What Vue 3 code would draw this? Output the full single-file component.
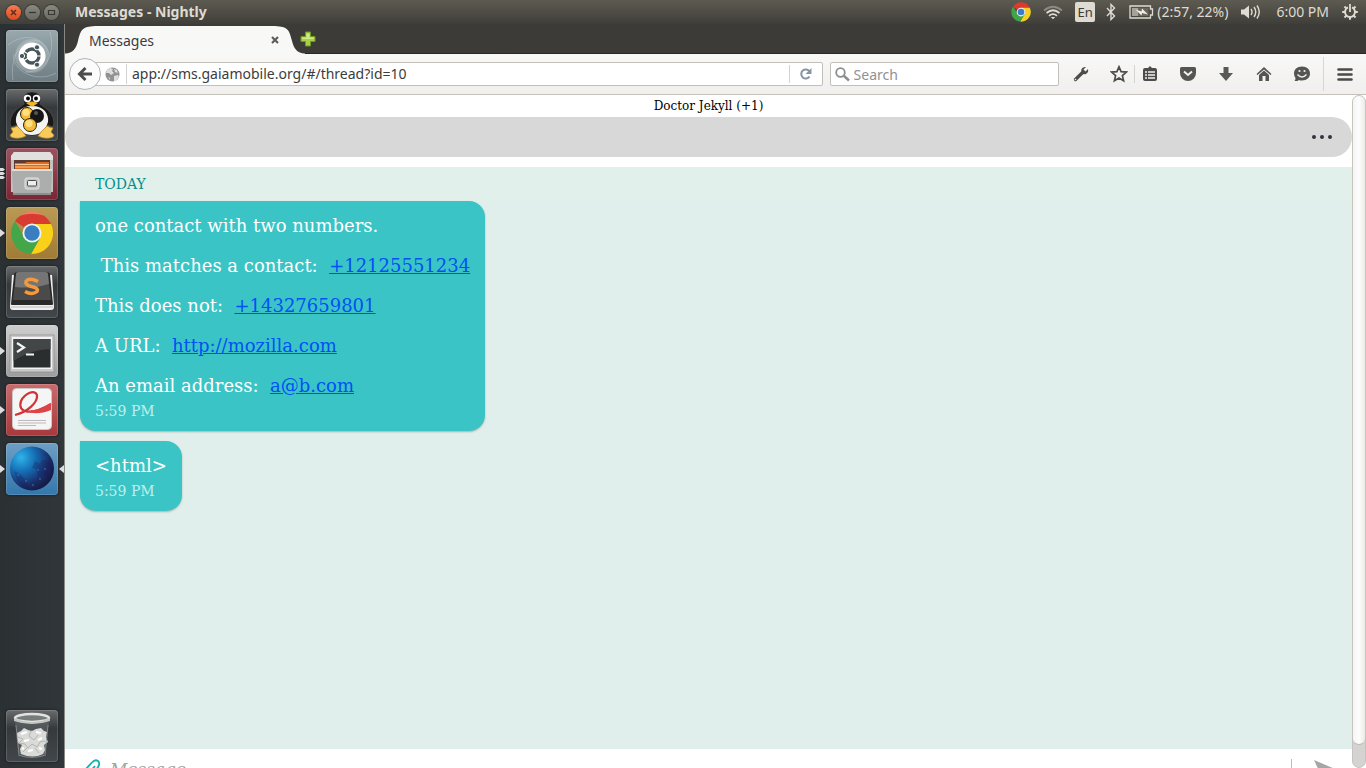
<script setup>
import { ref } from 'vue'

const address = ref('app://sms.gaiamobile.org/#/thread?id=10')
const query = ref('')
const draft = ref('')

const lines = [
  { text: ' This matches a contact:  ', link: '+12125551234', href: 'tel:+12125551234' },
  { text: 'This does not:  ', link: '+14327659801', href: 'tel:+14327659801' },
  { text: 'A URL:  ', link: 'http://mozilla.com', href: 'http://mozilla.com' },
  { text: 'An email address:  ', link: 'a@b.com', href: 'mailto:a@b.com' },
]
const spokes = [45, 90, 135, 180, 225, 270, 315]
</script>

<template>
  <div class="desktop">
    <header class="panel">
      <div class="window-buttons">
        <button class="wb wb-close" aria-label="Close window">
          <svg width="15" height="15" viewBox="0 0 15 15"><path d="M5 5l5 5M10 5l-5 5" stroke="#57301f" stroke-width="1.5" /></svg>
        </button>
        <button class="wb" aria-label="Minimize">
          <svg width="15" height="15" viewBox="0 0 15 15"><path d="M4 7.5h7" stroke="#383732" stroke-width="1.3" /></svg>
        </button>
        <button class="wb" aria-label="Restore">
          <svg width="15" height="15" viewBox="0 0 15 15"><path d="M4.5 5.500h6v4h-6z" fill="none" stroke="#383732" stroke-width="1.2" /></svg>
        </button>
      </div>
      <h1 class="window-title">Messages - Nightly</h1>
      <div class="indicators">
        <svg width="20" height="20" viewBox="0 0 48 48">
          <path d="M24 24L5 11A23 23 0 0 1 45 14H24z" fill="#dd3a2c" />
          <path d="M24 24L24 14H45A23 23 0 0 1 22 47L33 29z" fill="#f8cf22" />
          <path d="M24 24L33 29L22 47A23 23 0 0 1 5 11L16 29z" fill="#41a546" />
          <circle cx="24" cy="24" r="10.5" fill="#eef2f5" /><circle cx="24" cy="24" r="8" fill="#3a7cc5" />
        </svg>
        <svg class="i-wifi" width="20" height="16" viewBox="0 0 20 16" fill="none" stroke="#dfdbd2" stroke-width="1.7">
          <path d="M1 6.500Q10-1 19 6.500" stroke="#8d8a82" /><path d="M3.500 9Q10 3.500 16.500 9" /><path d="M6 11.800Q10 8.500 14 11.800" /><path d="M7.800 13h4.400L10 15.200z" fill="#dfdbd2" stroke="none" />
        </svg>
        <span class="lang">En</span>
        <svg class="i-bt" width="10" height="18" viewBox="0 0 10 18" fill="none" stroke="#dfdbd2" stroke-width="1.4"><path d="M1 5l7.500 8L5 16.500v-15L8.500 5 1 13" /></svg>
        <svg class="i-bat" width="25" height="14" viewBox="0 0 25 14">
          <path d="M1 1h20.500v3h2v6h-2v3H1z" fill="none" stroke="#dfdbd2" stroke-width="1.3" />
          <path d="M3 3h6v8H3z" fill="#a5a299" /><path d="M9 3h10.500v8H9z" fill="#6a675f" />
          <path d="M6.500 4.500l6 2 .5-3 6 6-6-1.500-.5 2.500z" fill="#f1eee8" />
        </svg>
        <span class="bat-text">(2:57, 22%)</span>
        <svg class="i-vol" width="21" height="16" viewBox="0 0 21 16">
          <path d="M1 5.500h3l5-4v13l-5-4H1z" fill="#dfdbd2" />
          <path d="M11 5q2 3 0 6M14 3q3.500 5 0 10M17 1.500q4.500 6.500 0 13" fill="none" stroke="#dfdbd2" stroke-width="1.4" />
        </svg>
        <time class="clock">6:00 PM</time>
        <svg class="i-gear" width="16" height="16" viewBox="0 0 16 16" fill="none" stroke="#dfdbd2">
          <path d="M6 3.400A5 5 0 1 0 10 3.400" stroke-width="1.9" /><path d="M8 0v8" stroke-width="1.8" />
          <path v-for="a in spokes" :key="a" d="M8 .2v3" stroke-width="2" :transform="`rotate(${a} 8 8)`" />
        </svg>
      </div>
    </header>

    <div class="body">
      <nav class="launcher" aria-label="Launcher">
        <button class="tile t-dash" aria-label="Dash">
          <svg width="52" height="52" viewBox="0 0 52 52">
            <g fill="none" stroke="#d5dddf" stroke-width="1" opacity=".35"><path d="M2 15C18 2 40 6 44 27" /><path d="M44 2C49 20 43 42 20 42" /><path d="M50 43C30 54 5 40 8 24" /><path d="M7 50C4 30 12 8 34 11" /></g>
            <circle cx="26" cy="26" r="17" fill="#fff" opacity=".18" /><circle cx="26" cy="26" r="13.500" fill="#fff" />
            <circle cx="26" cy="26" r="7" fill="none" stroke="#48565b" stroke-width="3.400" />
            <g stroke="#fff" stroke-width="1.200"><path d="M26 26l-9-5M26 26l-9 5M26 26h10" /></g>
            <circle cx="26" cy="26" r="5" fill="#fff" />
            <g fill="#48565b" stroke="#fff" stroke-width="1"><circle cx="16" cy="26" r="2.600" /><circle cx="31" cy="17.300" r="2.600" /><circle cx="31" cy="34.700" r="2.600" /></g>
          </svg>
        </button>
        <button class="tile t-dark" aria-label="Penguin app">
          <svg width="52" height="52" viewBox="0 0 52 52">
            <path d="M18 15Q16 3 26 3Q36 3 34 15L42 21Q50 29 47 38L41 36Q38 47 26 47Q14 47 11 36L5 38Q2 29 10 21z" fill="#191919" stroke="#555" stroke-width=".6" />
            <path d="M26 17C14 17 9 25 10 33Q14 46 26 46Q38 46 42 33C43 25 38 17 26 17z" fill="#f3f3f1" />
            <circle cx="21.500" cy="9.500" r="3.700" fill="#fff" /><circle cx="30.500" cy="9.500" r="3.700" fill="#fff" /><circle cx="22" cy="9.500" r="1.900" /><circle cx="30" cy="9.500" r="1.900" />
            <path d="M20 14q6-3 12 0l-6 4z" fill="#efb529" />
            <circle cx="21" cy="25" r="6.500" fill="#f2bc38" stroke="#2a2308" /><circle cx="31" cy="27" r="7" fill="#161616" /><circle cx="24" cy="36" r="6.500" fill="#f2bc38" stroke="#2a2308" />
            <circle cx="20" cy="23.500" r="3.500" fill="#ffdf80" /><circle cx="30" cy="24" r="2" fill="#555" /><circle cx="23" cy="34.500" r="3.500" fill="#ffdf80" />
            <path d="M4 46l3-3-2-4 4-1 2-1 6 6 3 4q-8 4-15 1z M48 46l-3-3 2-4-4-1-2-1-6 6-3 4q8 4 15 1z" fill="#f9cb5a" stroke="#b98520" stroke-width=".8" />
          </svg>
        </button>
        <button class="tile t-files" aria-label="Files">
          <svg width="52" height="52" viewBox="0 0 52 52">
            <path d="M8 4h36l3 4v36H5V8z" fill="#c2c2c0" /><path d="M8 4h36l3 4v4H5V8z" fill="#e0e0de" />
            <path d="M8 12h36v10H8z" fill="#5d3a33" /><path d="M9 15h10l2-1h22v8H9z" fill="#da6c22" /><path d="M9 16.500h34M9 19h34" stroke="#ffc994" stroke-width="1.200" />
            <path d="M6 21.500h40l-1 25.500H7z" fill="#acadad" /><path d="M6 21h40v2H6z" fill="#dededd" /><path d="M7 45h38v2H7z" fill="#8e8e8e" />
            <rect x="19" y="30" width="14" height="11" rx="2" fill="#c4c4c2" stroke="#e4e4e4" /><rect x="21.500" y="32.500" width="9" height="5.500" rx="1" fill="#eee" stroke="#4b4b4b" />
          </svg>
          <svg class="pips" width="5" height="11" viewBox="0 0 5 11" fill="#ddd"><path d="M0 0h3l2 1.500L3 3H0zM0 4h3l2 1.500L3 7H0zM0 8h3l2 1.500L3 11H0z" /></svg>
        </button>
        <button class="tile t-chrome" aria-label="Google Chrome">
          <svg width="52" height="52" viewBox="0 0 52 52">
            <path d="M26 26L9 14A21 21 0 0 1 45 17H26z" fill="#d93b31" /><path d="M26 26V17H45A21 21 0 0 1 25 47L34 31z" fill="#fad019" /><path d="M26 26L34 31L25 47A21 21 0 0 1 9 14L18 30z" fill="#43a649" />
            <path d="M14 8.500Q26 1 38 8.500Q26 5 14 8.500z" fill="#f27c70" />
            <circle cx="26" cy="26" r="9.500" fill="#eef3f6" /><circle cx="26" cy="26" r="7.700" fill="#397ec0" />
          </svg>
          <i class="pip"></i>
        </button>
        <button class="tile t-dark" aria-label="Sublime Text">
          <svg width="52" height="52" viewBox="0 0 52 52">
            <path d="M6 9L4 41q0 3 3 3h38q3 0 3-3L46 9z" fill="#efefef" /><path d="M5 41h42" stroke="#bbb" />
            <path d="M8 9q0-3 4-3h28q4 0 4 3l3 29q0 1-1 1H6q-1 0-1-1z" fill="#292929" />
            <path d="M10 8q0-2 3-2h26q3 0 3 2l3 26H7z" fill="#4a4a4a" /><path d="M10 8q0-2 3-2h26q3 0 3 2l1 10q-16 5-34 3z" fill="#808080" opacity=".8" />
            <path d="M32 15.500Q23 11 20 15.500Q19 19 25.500 20.500Q33 22 31 25.500Q26 29.500 19 25.500" fill="none" stroke="#f59a3c" stroke-width="3.500" />
          </svg>
        </button>
        <button class="tile t-term" aria-label="Terminal">
          <svg width="52" height="52" viewBox="0 0 52 52">
            <path d="M4 10h44v37H4z" fill="#c9c9c9" stroke="#8a8a8a" stroke-width=".7" /><path d="M6 12h40v32H6z" fill="#f3f3f3" /><path d="M7.500 14h37v28.500h-37z" fill="#2b2e2e" /><path d="M7.500 14h37v10q-18 0-37 12z" fill="#434646" />
            <path d="M11 18l7 4.500-7 4.500M20 29.500h8" fill="none" stroke="#f5f5f5" stroke-width="2.200" />
          </svg>
          <i class="pip"></i>
        </button>
        <button class="tile t-reader" aria-label="Document viewer">
          <svg width="52" height="52" viewBox="0 0 52 52">
            <rect x="6.500" y="4.500" width="39" height="41" rx="4" fill="#f5f5f5" stroke="#c9c9c9" />
            <path d="M9 31C21 28 32 19 31 11C29 5 19 9 15 17C11 29 25 32 45 20" fill="none" stroke="#d13438" stroke-width="2.300" /><path d="M20 27Q30 28 45 19V26Q30 32 20 27z" fill="#dc4447" />
            <path d="M12 36.500h28M12 39h28M12 41.500h18" stroke="#bbb" />
          </svg>
          <i class="pip"></i>
        </button>
        <button class="tile t-nightly" aria-label="Nightly">
          <svg width="52" height="52" viewBox="0 0 52 52">
            <defs><radialGradient id="globe" cx=".25" cy=".25" r=".85"><stop offset="0" stop-color="#2eb4ea" /><stop offset=".4" stop-color="#156bb1" /><stop offset=".75" stop-color="#1a2d69" /><stop offset="1" stop-color="#131940" /></radialGradient></defs>
            <circle cx="26" cy="25.500" r="22" fill="url(#globe)" />
            <path d="M29 18l5 3 2-4 8 1 3 7-4 11-6-5-5 2-2-7-4-1zM8 28l7 4 6 7 2 7-6-2-6-7z" fill="#1b1b55" opacity=".3" />
            <g fill="#4fa4df" opacity=".7"><circle cx="12" cy="32" r=".8" /><circle cx="20" cy="38" r=".8" /><circle cx="34" cy="36" r=".8" /><circle cx="39" cy="26" r=".8" /><circle cx="32" cy="27" r=".7" /><circle cx="27" cy="42" r=".8" /></g>
          </svg>
          <i class="pip"></i><i class="pip pip-right"></i>
        </button>
        <button class="tile t-dark t-trash" aria-label="Trash">
          <svg width="52" height="52" viewBox="0 0 52 52">
            <path d="M9 10l3 34q1 3 14 3t14-3l3-34z" fill="#697174" opacity=".5" />
            <path d="M11 23l4-2 3-3 4 2 4 1 4-2 5-1 3 3 3 1-1 5 2 5-4 3 1 5-2 4q-10 5-22 0l-1-5 2-4-4-2-1-5z" fill="#dadbd8" />
            <path d="M12 27l5 2-4 4 6 1 3 4 4-4 5 3 3-5 5-1M25 21l-2 5 5 4 4-5M17 42l4-4M33 43l-4-5" fill="none" stroke="#b3b5b0" stroke-width="1" />
            <path d="M15 24l6-2M30 22l5 1M18 31l5-1M32 30l4-2M22 41l5-1M33 38l3 1M16 38l2 1" stroke="#fff" stroke-width="2" />
            <path d="M10 15l3 29M42 15l-3 29M12 45q14 5 28 0" fill="none" stroke="#91989a" opacity=".7" />
            <ellipse cx="26" cy="8" rx="17" ry="4" fill="#777b7b" stroke="#e2e3e0" stroke-width="2.500" /><path d="M8 8v3q18 6 36 0V8q-18 8-36 0" fill="#c4c6c3" />
          </svg>
        </button>
      </nav>

      <main class="browser">
        <div class="tabstrip">
          <div class="tab">
            <svg width="30" height="30" viewBox="0 0 30 30"><path d="M0 30V29.500C8 29 11 25 13 17C16 5 17 3 30 2V30z" fill="#f8f8f7" /></svg>
            <div class="tab-mid"><span>Messages</span>
              <button class="plain" aria-label="Close tab"><svg width="8" height="8" viewBox="0 0 8 8"><path d="M1 1l6 6M7 1L1 7" stroke="#5d5d5a" stroke-width="2.200" /></svg></button>
            </div>
            <svg width="30" height="30" viewBox="0 0 30 30"><path d="M30 30V29.500C22 29 19 25 17 17C14 5 13 3 0 2V30z" fill="#f8f8f7" /></svg>
          </div>
          <button class="plain newtab" aria-label="New tab"><svg width="16" height="16" viewBox="0 0 16 16"><path d="M5.500 1h5v4.500H15v5h-4.500V15h-5v-4.500H1v-5h4.500z" fill="#a8cf45" stroke="#6d9a20" /><path d="M6.500 2.500h3v4H14v1.500H2V6.500h4.500z" fill="#d2e888" /></svg></button>
        </div>

        <div class="toolbar">
          <button class="back" aria-label="Back"><svg width="16" height="16" viewBox="0 0 16 16"><path d="M15 8H4M8.500 2L2.500 8l6 6" fill="none" stroke="#4c4c4c" stroke-width="3" /></svg></button>
          <div class="urlbar">
            <svg width="15" height="15" viewBox="0 0 15 15"><circle cx="7.500" cy="7.500" r="7" fill="#929292" /><path d="M2 3l3-2 3 1-1 2 2 2-3 2-2-2-3 0zM9 9l4-1 1 2-3 4H9zM9 2l3 1 1 3-3-1z" fill="#dedede" /><path d="M3 10l2 1v2z" fill="#dedede" /></svg>
            <input v-model="address" class="url" type="text" aria-label="Address" spellcheck="false">
            <button class="plain reload" aria-label="Reload"><svg width="14" height="14" viewBox="0 0 14 14"><path d="M10.500 9.500A4.500 4.500 0 1 1 10.500 4.500" fill="none" stroke="#8795a4" stroke-width="2" /><path d="M12.500 1v6H6.500z" fill="#8795a4" /></svg></button>
          </div>
          <div class="searchbar">
            <svg width="15" height="15" viewBox="0 0 15 15" fill="none" stroke="#8d8d8d"><circle cx="5.500" cy="5.500" r="4.300" stroke-width="1.800" /><path d="M8.800 8.800L14 13.500" stroke-width="2.500" /></svg>
            <input v-model="query" type="text" placeholder="Search" aria-label="Search">
          </div>
          <div class="tools">
            <button class="plain" aria-label="Developer tools"><svg width="16" height="16" viewBox="0 0 16 16"><path d="M2.500 13.500L9 7" stroke="#4c4c4c" stroke-width="3.200" stroke-linecap="round" /><path d="M8 7L8.500 3Q10 .5 13 1L10.500 3.500 12.500 5.500 15 3Q16 6.500 12.500 8.300L9 8z" fill="#4c4c4c" /><circle cx="2.500" cy="13.500" r=".8" fill="#eee" /></svg></button>
            <button class="plain" aria-label="Bookmark"><svg width="18" height="18" viewBox="0 0 18 18"><path d="M9 1.800l2.100 4.900 5.300.4-4 3.500 1.200 5.200L9 13l-4.600 2.800 1.200-5.200-4-3.500 5.300-.4z" fill="none" stroke="#4c4c4c" stroke-width="1.700" /></svg></button>
            <button class="plain clip" aria-label="Bookmarks list"><svg width="16" height="16" viewBox="0 0 16 16"><path d="M3 2h3l2-2 2 2h3q2 0 2 2v9q0 2-2 2H3q-2 0-2-2V4q0-2 2-2z" fill="#4c4c4c" /><path d="M3 6h2M6 6h7M3 9h2M6 9h7M3 12h2M6 12h7" stroke="#f2f1f0" stroke-width="1.700" /></svg></button>
            <button class="plain" aria-label="Pocket"><svg width="18" height="16" viewBox="0 0 18 16"><path d="M2.500 1h13q1.500 0 1.500 1.500V7a8 8 0 0 1-16 0V2.500Q1 1 2.500 1z" fill="#555" /><path d="M5 5.500l4 3.500 4-3.500" fill="none" stroke="#f2f1f0" stroke-width="2" /></svg></button>
            <button class="plain" aria-label="Downloads"><svg width="16" height="16" viewBox="0 0 16 16"><path d="M5.500 1h5v6H15l-7 8L1 7h4.500z" fill="#595959" /></svg></button>
            <button class="plain" aria-label="Home"><svg width="16" height="16" viewBox="0 0 16 16"><path d="M.5 8L8 1l7.500 7-1 1L8 3.500 1.500 9z" fill="#555" /><path d="M3 9l5-4.500L13 9v6H9.500v-5h-3v5H3z" fill="#555" /></svg></button>
            <button class="plain" aria-label="Chat"><svg width="18" height="16" viewBox="0 0 18 16"><path d="M9 .5c5 0 8 3 8 7s-3 7-8 7q-2 0-3-.6Q4 15.500 1.500 15q1-1 1-3Q1 10 1 7.500C1 3.500 4 .5 9 .5z" fill="#555" /><path d="M4.500 8.500q4.500 5 9 0" fill="none" stroke="#eee" stroke-width="1.500" /><circle cx="6.500" cy="5" r="1.100" fill="#eee" /><circle cx="11.500" cy="5" r="1.100" fill="#eee" /></svg></button>
            <button class="plain menu" aria-label="Menu"><svg width="16" height="13" viewBox="0 0 16 13"><path d="M1.500 1.500h13M1.500 6.500h13M1.500 11.500h13" stroke="#4a4a4a" stroke-width="2.600" stroke-linecap="round" /></svg></button>
          </div>
        </div>

        <div class="viewport">
          <section class="page">
            <h2 class="contact">Doctor Jekyll (+1)</h2>
            <div class="actionbar"><button class="plain" aria-label="Options"><svg width="20" height="4" viewBox="0 0 20 4" fill="#333440"><circle cx="2" cy="2" r="2" /><circle cx="10" cy="2" r="2" /><circle cx="18" cy="2" r="2" /></svg></button></div>
            <div class="thread">
              <h3 class="day">TODAY</h3>
              <ul class="messages">
                <li class="bubble">
                  <p>one contact with two numbers.</p>
                  <p v-for="l in lines" :key="l.link" class="spaced">{{ l.text }}<a :href="l.href">{{ l.link }}</a></p>
                  <time>5:59 PM</time>
                </li>
                <li class="bubble"><p>&lt;html&gt;</p><time>5:59 PM</time></li>
              </ul>
            </div>
            <form class="composer" @submit.prevent>
              <button type="button" class="plain" aria-label="Attach"><svg width="20" height="26" viewBox="0 0 20 26"><path d="M0 13L9 3.500Q12 0 15 2Q17.500 4 15 8L7 20Q3 22 2 18M5 15L12 7" fill="none" stroke="#16aeb0" stroke-width="1.800" /></svg></button>
              <input v-model="draft" type="text" placeholder="Message" aria-label="Message">
              <button class="plain send" aria-label="Send"><svg width="28" height="28" viewBox="0 0 28 28"><path d="M0 1l28 12L0 27l6-13z" fill="#a6a6a6" /></svg></button>
            </form>
          </section>
          <div class="scrollbar"><div class="thumb"></div></div>
        </div>
      </main>
    </div>
  </div>
</template>

<style>
body { overflow: hidden; }
</style>

<style scoped>
* { box-sizing: border-box; }
h1, h2, h3, p, ul { margin: 0; padding: 0; font-weight: normal; }
svg { display: block; flex: none; }
button { padding: 0; border: 0; cursor: pointer; font: inherit; }
.plain { background: none; display: flex; align-items: center; justify-content: center; flex: none; }
input { border: 0; outline: 0; background: none; padding: 0; min-width: 0; flex: 1; font: inherit; color: inherit; }
.desktop { height: 100vh; display: flex; flex-direction: column; overflow: hidden; font-family: "Noto Sans", "Open Sans", sans-serif; font-size: 14px; color: #3c3c3c; }

.panel { flex: none; height: 24px; display: flex; align-items: center; padding: 0 8px 0 6px; background: linear-gradient(#5d5b51, #3f3e39); color: #dfdbd2; }
.window-buttons { display: flex; gap: 4px; }
.wb { width: 15px; height: 15px; border-radius: 50%; background: linear-gradient(#8a8981, #6a6962); box-shadow: 0 0 0 1px #3c3b37; }
.wb-close { background: linear-gradient(#f47b55, #df4b1d); }
.window-title { margin-left: 16px; font-size: 14px; font-weight: 700; line-height: 24px; }
.indicators { margin-left: auto; display: flex; align-items: center; line-height: 24px; white-space: nowrap; }
.i-wifi { margin-left: 12px; }
.lang { margin-left: 12px; width: 20px; height: 20px; line-height: 21px; text-align: center; border-radius: 2px; background: #dfdbd2; color: #3c3b37; font-size: 13px; }
.i-bt { margin-left: 11px; }
.i-bat { margin-left: 13px; }
.bat-text { margin-left: 3px; }
.i-vol { margin-left: 12px; }
.clock { margin-left: 15px; }
.i-gear { margin-left: 13px; }

.body { flex: 1; min-height: 0; display: flex; }
.launcher { flex: none; width: 65px; padding: 6px; display: flex; flex-direction: column; gap: 7px; background: linear-gradient(90deg, #2b3033, #303639); border-right: 1px solid #8a8a85; }
.tile { position: relative; width: 52px; height: 52px; border-radius: 4px; box-shadow: inset 0 0 0 1px rgba(255,255,255,.15), 0 0 3px rgba(0,0,0,.5); }
.t-dash { background: linear-gradient(#99a8ad, #6d7d83); }
.t-dark { background: linear-gradient(#696b6d, #36393b 35%, #42474b); }
.t-files { background: linear-gradient(#9b5360, #7b2533); }
.t-chrome { background: linear-gradient(#b99a55, #9f7b35); }
.t-term { background: linear-gradient(#cecece, #9d9d9d); }
.t-reader { background: linear-gradient(#c96b6c, #a8383c); }
.t-nightly { background: linear-gradient(#6e9fc5, #3477ab); }
.t-trash { margin-top: auto; }
.pip { position: absolute; left: -6px; top: 22px; border: 4px solid transparent; border-left: 5px solid #ddd; border-right: 0; }
.pip-right { left: auto; right: -6px; border-left: 0; border-right: 5px solid #ddd; }
.pips { position: absolute; left: -6px; top: 20px; }

.browser { flex: 1; min-width: 0; display: flex; flex-direction: column; background: #fff; }
.tabstrip { flex: none; height: 30px; display: flex; background: #3c3b37; box-shadow: inset 0 -1px #292825; }
.tab { display: flex; }
.tab-mid { width: 180px; margin-top: 2px; height: 28px; background: #f8f8f7; display: flex; align-items: center; justify-content: space-between; }
.tab-mid span { margin-left: -6px; }
.tab-mid button { margin-right: -4px; z-index: 1; }
.newtab { margin-left: -5px; }
.toolbar { flex: none; height: 41px; display: flex; align-items: center; padding: 0 4px; background: linear-gradient(#f8f8f7, #f0efed); border-bottom: 1px solid #c5c1bb; }
.back { flex: none; width: 32px; height: 32px; border-radius: 50%; border: 1px solid #aeb4bb; background: #fbfbfb; display: flex; align-items: center; justify-content: center; z-index: 1; }
.urlbar { flex: 800; height: 24px; margin-left: -8px; display: flex; align-items: center; border: 1px solid #c3bfba; border-radius: 2px; background: #fff; padding-left: 11px; }
.url { margin-left: 6px; padding-left: 5px; border-left: 1px solid #d3d3d3; height: 20px; line-height: 20px; }
.reload { width: 33px; height: 18px; border-left: 1px solid #d3d3d3; }
.searchbar { flex: 245; height: 24px; margin-left: 7px; display: flex; align-items: center; gap: 4px; padding: 0 4px; border: 1px solid #c3bfba; border-radius: 2px; background: #fff; }
.searchbar input::placeholder { color: #919191; opacity: 1; }
.tools { flex: none; display: flex; align-items: center; height: 100%; margin-left: 3px; }
.tools button { width: 38px; height: 18px; }
.tools .clip { width: 31px; border-left: 1px solid #d3d3d3; margin-left: -4px; }
.tools .clip + button { margin-left: 4px; }
.tools .menu { width: 43px; height: 34px; border-left: 1px solid #d8d6d2; margin: 0 -4px 0 2px; }

.viewport { flex: 1; min-height: 0; display: flex; font-family: "DejaVu Serif", serif; }
.page { flex: 1; min-width: 0; display: flex; flex-direction: column; overflow: hidden; }
.contact { flex: none; height: 22px; line-height: 22px; font-size: 12px; text-align: center; color: #000; }
.actionbar { flex: none; height: 40px; border-radius: 20px; background: #d8d8d8; display: flex; align-items: center; justify-content: flex-end; padding-right: 20px; }
.thread { flex: 1; min-height: 0; margin-top: 10px; background: #e0efeb; overflow: hidden; }
.day { height: 34px; line-height: 34px; padding-left: 30px; font-size: 14px; color: #008f8f; background: #e1f0ea; }
.messages { list-style: none; display: flex; flex-direction: column; align-items: flex-start; gap: 10px; padding: 0 15px; }
.bubble { padding: 15px 15px 10px; border-radius: 0 16px 16px 16px; background: #3ac4c5; box-shadow: 0 1px 2px rgba(0,0,0,.25); color: #fff; font-size: 18px; line-height: 20px; }
.bubble p { white-space: pre-wrap; }
.bubble .spaced { margin-top: 20px; }
.bubble a { color: #0050f5; text-decoration: underline; }
.bubble time { display: block; margin-top: 5px; font-size: 14px; color: #c1efec; }
.composer { flex: none; height: 19px; display: flex; align-items: flex-start; padding: 10px 10px 0 18px; background: #fff; }
.composer input { height: 20px; margin-left: 7px; font-size: 17px; font-style: italic; line-height: 20px; }
.composer input::placeholder { color: #a2a2a2; opacity: 1; }
.send { width: 51px; border-left: 1px solid #bcbcbc; height: 28px; justify-content: flex-end; }
.scrollbar { flex: none; width: 14px; border: 1px solid #c7c3be; border-radius: 7px; background: #d4d3d1; }
.thumb { height: calc(100% - 22px); border-radius: 6px; border-bottom: 1px solid #bcb8b3; background: linear-gradient(90deg, #f6f5f4, #fdfdfd, #ebeae8); }
</style>
